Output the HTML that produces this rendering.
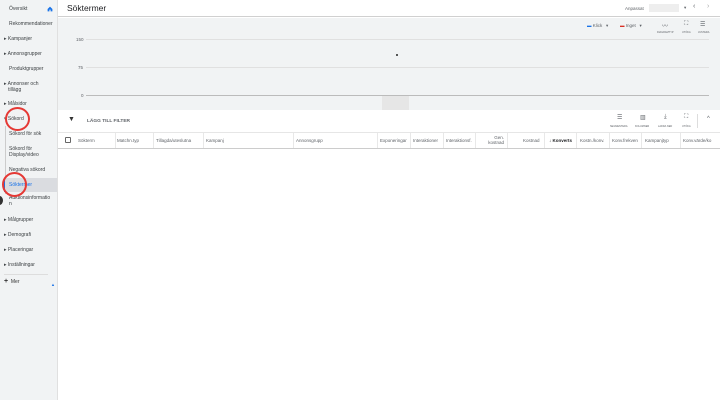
<!DOCTYPE html><html><head><meta charset="utf-8"><style>
*{box-sizing:border-box;margin:0;padding:0}
body{width:720px;height:400px;overflow:hidden;background:#fff;font-family:"Liberation Sans",sans-serif;color:#5f6368;position:relative}
.a{position:absolute;white-space:nowrap}
.sb{position:absolute;left:0;top:0;width:58px;height:400px;background:#f1f3f4;border-right:1px solid #e0e0e0}
.si{position:absolute;font-size:5px;color:#3c4043;line-height:6px}
.t{font-size:4.5px;color:#5f6368}
.col{position:absolute;top:133px;height:15px;border-left:1px solid #e8e8e8}
</style></head><body>
<div class="sb"></div>
<div class="si" style="left:9px;top:6px">Översikt</div>
<svg class="a" style="left:47px;top:6px" width="6" height="6" viewBox="0 0 10 10"><path d="M1 5L5 1L9 5V9H6V6H4V9H1Z" fill="#1a73e8"/></svg>
<div class="si" style="left:9px;top:21px">Rekommendationer</div>
<div class="si" style="left:4px;top:36px">▸ Kampanjer</div>
<div class="si" style="left:4px;top:51px">▸ Annonsgrupper</div>
<div class="si" style="left:9px;top:66px">Produktgrupper</div>
<div class="si" style="left:4px;top:81px">▸ Annonser och<br>&nbsp;&nbsp;&nbsp;tillägg</div>
<div class="si" style="left:4px;top:101px">▸ Målsidor</div>
<div class="si" style="left:4px;top:116px">▾ Sökord</div>
<div class="a" style="left:5px;top:126px;width:1px;height:68px;background:#ccc"></div>
<div class="si" style="left:9px;top:131px">Sökord för sök</div>
<div class="si" style="left:9px;top:146px">Sökord för<br>Display/video</div>
<div class="si" style="left:9px;top:167px">Negativa sökord</div>
<div class="a" style="left:4px;top:178px;width:53px;height:14px;background:#dadce0"></div>
<div class="a" style="left:4px;top:178px;width:1px;height:14px;background:#1a73e8"></div>
<div class="si" style="left:9px;top:182px;color:#1a73e8">Söktermer</div>
<div class="si" style="left:9px;top:195px">Auktionsinformatio<br>n</div>
<div class="a" style="left:-4px;top:196px;width:7px;height:9px;border-radius:50%;background:#333"></div>
<div class="si" style="left:4px;top:217px">▸ Målgrupper</div>
<div class="si" style="left:4px;top:232px">▸ Demografi</div>
<div class="si" style="left:4px;top:247px">▸ Placeringar</div>
<div class="si" style="left:4px;top:262px">▸ Inställningar</div>
<div class="a" style="left:4px;top:274px;width:44px;height:1px;background:#ddd"></div>
<div class="si" style="left:4px;top:279px;color:#333"><b style="font-size:7px">+</b> &nbsp;Mer</div>
<div class="a" style="left:51px;top:282px;font-size:4px;color:#1a73e8">▲</div>
<div class="a" style="left:5px;top:107px;width:25px;height:24px;border:2px solid #e53935;border-radius:50%"></div>
<div class="a" style="left:2px;top:172px;width:25px;height:25px;border:2px solid #e53935;border-radius:50%"></div>
<div class="a" style="left:58px;top:0;width:662px;height:17px;background:#fff;border-bottom:1px solid #d0d0d0"></div>
<div class="a" style="left:67px;top:3px;font-size:8.5px;color:#202124">Söktermer</div>
<div class="a t" style="left:625px;top:6px">Anpassat</div>
<div class="a" style="left:649px;top:4px;width:30px;height:8px;background:#eee"></div>
<div class="a t" style="left:684px;top:5px">▾</div>
<div class="a" style="left:693px;top:3px;font-size:7px">‹</div>
<div class="a" style="left:707px;top:3px;font-size:7px;color:#aaa">›</div>
<div class="a" style="left:58px;top:18px;width:662px;height:92px;background:#f1f3f4"></div>
<div class="a t" style="left:587px;top:23px"><span style="color:#1a73e8">▬</span> Klick &nbsp;&nbsp;▾</div>
<div class="a t" style="left:620px;top:23px"><span style="color:#d93025">▬</span> Inget &nbsp;&nbsp;▾</div>
<div class="a" style="left:662px;top:21px;font-size:6px">〰</div>
<div class="a" style="left:684px;top:21px;font-size:6px">⛶</div>
<div class="a" style="left:700px;top:21px;font-size:6px">☰</div>
<div class="a" style="left:657px;top:31px;font-size:2.5px">DIAGRAMTYP</div>
<div class="a" style="left:682px;top:31px;font-size:2.5px">UTÖKA</div>
<div class="a" style="left:698px;top:31px;font-size:2.5px">JUSTERA</div>
<div class="a t" style="left:76px;top:37px">150</div>
<div class="a t" style="left:78px;top:65px">75</div>
<div class="a t" style="left:81px;top:93px">0</div>
<div class="a" style="left:86px;top:39px;width:623px;height:1px;background:#e0e0e0"></div>
<div class="a" style="left:86px;top:67px;width:623px;height:1px;background:#e0e0e0"></div>
<div class="a" style="left:86px;top:95px;width:623px;height:1px;background:#bbb"></div>
<div class="a" style="left:382px;top:96px;width:27px;height:14px;background:#e6e6e6"></div>
<div class="a" style="left:396px;top:54px;width:2px;height:2px;background:#555"></div>
<div class="a" style="left:68px;top:116px;font-size:7px;color:#333">▼</div>
<div class="a" style="left:87px;top:119px;font-size:4.8px;color:#5f6368;font-weight:bold">LÄGG TILL FILTER</div>
<div class="a" style="left:617px;top:114px;font-size:6px">☰</div>
<div class="a" style="left:640px;top:114px;font-size:6px">▥</div>
<div class="a" style="left:664px;top:114px;font-size:6px">⤓</div>
<div class="a" style="left:684px;top:114px;font-size:6px">⛶</div>
<div class="a" style="left:610px;top:125px;font-size:2.5px">SEGMENTERA</div>
<div class="a" style="left:635px;top:125px;font-size:2.5px">KOLUMNER</div>
<div class="a" style="left:658px;top:125px;font-size:2.5px">LADDA NED</div>
<div class="a" style="left:682px;top:125px;font-size:2.5px">UTÖKA</div>
<div class="a" style="left:697px;top:114px;width:1px;height:14px;background:#ddd"></div>
<div class="a" style="left:707px;top:116px;font-size:6px">^</div>
<div class="a" style="left:58px;top:132px;width:662px;height:1px;background:#e6e6e6"></div>
<div class="a" style="left:58px;top:148px;width:662px;height:1px;background:#ccc"></div>
<div class="a" style="left:65px;top:137px;width:6px;height:6px;border:1px solid #666;border-radius:1px"></div>
<div class="a t" style="left:78px;top:138px">Sökterm</div>
<div class="col" style="left:115px"></div><div class="a t" style="left:117px;top:138px">Matchn.typ</div>
<div class="col" style="left:153px"></div><div class="a t" style="left:156px;top:138px">Tillagda/uteslutna</div>
<div class="col" style="left:203px"></div><div class="a t" style="left:206px;top:138px">Kampanj</div>
<div class="col" style="left:293px"></div><div class="a t" style="left:296px;top:138px">Annonsgrupp</div>
<div class="col" style="left:377px"></div><div class="a t" style="left:380px;top:138px">Exponeringar</div>
<div class="col" style="left:410px"></div><div class="a t" style="left:413px;top:138px">Interaktioner</div>
<div class="col" style="left:443px"></div><div class="a t" style="left:446px;top:138px">Interaktionsf.</div>
<div class="col" style="left:475px"></div><div class="a t" style="left:480px;top:135px;text-align:right;width:24px;line-height:5px">Gen.<br>kostnad</div>
<div class="col" style="left:507px"></div><div class="a t" style="left:523px;top:138px">Kostnad</div>
<div class="col" style="left:544px"></div><div class="a t" style="left:549px;top:138px;color:#202124;font-weight:bold">↓ Konverts</div>
<div class="col" style="left:576px"></div><div class="a t" style="left:580px;top:138px">Kostn./konv.</div>
<div class="col" style="left:609px"></div><div class="a t" style="left:612px;top:138px">Konv.frekven</div>
<div class="col" style="left:641px"></div><div class="a t" style="left:645px;top:138px">Kampanjtyp</div>
<div class="col" style="left:680px"></div><div class="a t" style="left:683px;top:138px">Konv.värde/ko</div>
</body></html>
